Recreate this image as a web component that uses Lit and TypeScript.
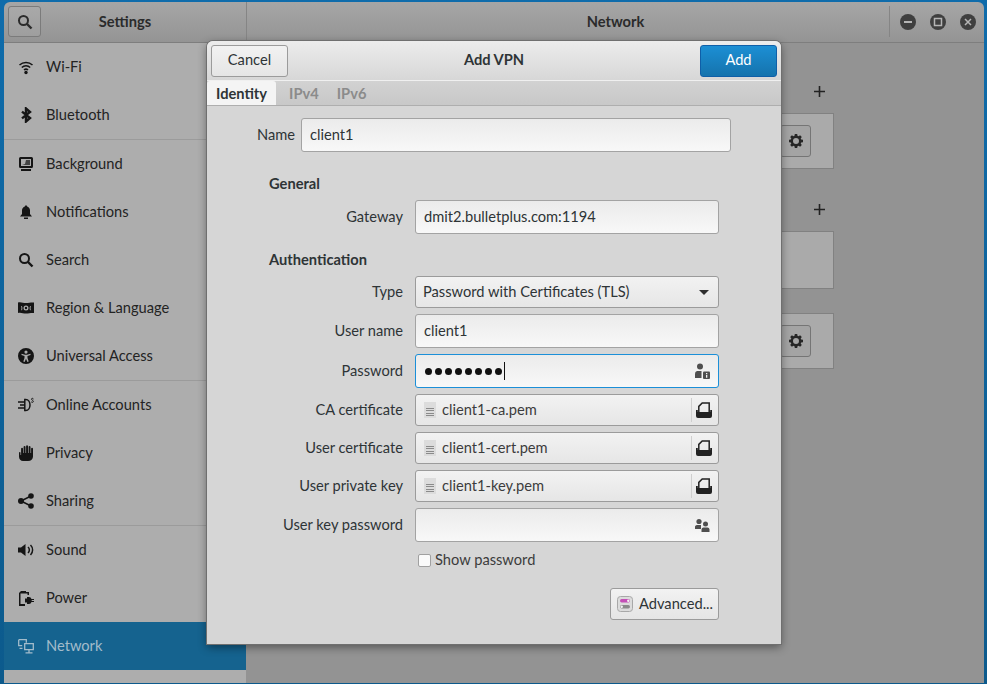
import { LitElement, html, css, svg } from 'lit';
import { customElement } from 'lit/decorators.js';

const FONT = css`Lato, "Noto Sans", sans-serif`;

const icon = (body: unknown, size = 16) => html`<svg class="ic" width=${size} height=${size} viewBox="0 0 16 16" fill="currentColor">${body}</svg>`;

const ICONS: Record<string, unknown> = {
    wifi: svg`<g fill="none" stroke="currentColor" stroke-width="1.5"><path d="M1.5 6a9.5 9.5 0 0 1 13 0"/><path d="M3.8 8.5a6 6 0 0 1 8.4 0"/><path d="M6 11a3 3 0 0 1 4 0"/></g><circle cx="8" cy="13.5" r="1.7"/>`,
    bluetooth: svg`<path fill="none" stroke="currentColor" stroke-width="2.4" d="M4 4.600l8 6.400-4 3.500V1.500l4 3.500-8 6.400"/>`,
    background: svg`<path fill-rule="evenodd" d="M2.500 1h11A1.500 1.500 0 0 1 15 2.500v8a1.500 1.500 0 0 1-1.500 1.500h-11A1.500 1.500 0 0 1 1 10.500v-8A1.500 1.500 0 0 1 2.500 1zM3 3v7h10V3z"/><path d="M4 9l3-1 1-4h4v5z" opacity=".7"/><rect x="3" y="13" width="10" height="2"/>`,
    bell: svg`<path d="M8 1.500c-.8 0-1.300.5-1.400 1.200C4.800 3.300 4 4.800 4 6.500V10l-2 2.500h12L12 10V6.500c0-1.700-.8-3.200-2.600-3.800C9.300 2 8.800 1.500 8 1.500z"/><rect x="6" y="13.500" width="4" height="1.500"/>`,
    search: svg`<circle cx="6.500" cy="6.500" r="4.500" fill="none" stroke="currentColor" stroke-width="2"/><path d="M10 10l4.500 4.500" stroke="currentColor" stroke-width="2.400"/>`,
    region: svg`<path fill-rule="evenodd" d="M0 2.500c3-.8 5 .6 8 .6s5-1 8-.6v10.500c-3-.4-5 .6-8 .6s-5-1.400-8-.6zM8 5.500a2.500 2.500 0 1 0 0 5 2.500 2.500 0 0 0 0-5zm0 1.300a1.200 1.200 0 1 1 0 2.400 1.200 1.200 0 0 1 0-2.400z"/><path d="M3.500 6.200c.5 1.500.5 2.600 0 4M12.500 6.200c-.5 1.500-.5 2.600 0 4" stroke="#adadad" fill="none"/>`,
    access: svg`<path fill-rule="evenodd" d="M8 0a8 8 0 1 1 0 16A8 8 0 0 1 8 0zm0 2.500a1.600 1.600 0 1 0 0 3.200 1.600 1.600 0 0 0 0-3.200zM3.500 5.800v1.300l3 .9v2l-1.200 3.600 1.300.4L8 10.800l1.400 3.200 1.300-.4L9.500 10V8l3-.9V5.800L9 6.800H7z"/>`,
    online: svg`<path fill="none" stroke="currentColor" stroke-width="1.500" d="M6.800 2.500v11h1c2.600 0 4.200-2.500 4.200-5.500s-1.600-5.500-4.200-5.500zM0 5h6.800M0 11h6.800M2 8h4.800"/><path fill="none" stroke="currentColor" stroke-width="1" d="M15.500 2c-.8-1-2-.8-2 .2s1.800 1 1.800 2.200-1.300 1.200-2.100.4"/>`,
    hand: svg`<path d="M1 7.500v4.300C1 14.200 2.800 16 5 16h5c3 0 5-1.800 5-4.500V3.500a1 1 0 0 0-1.900 0V8h-.6V1.700a1 1 0 0 0-1.900 0V8H10V1a1 1 0 0 0-1.900 0v7h-.6V1.700a1 1 0 0 0-1.900 0V8H5V3.500a1 1 0 0 0-1.900 0v6.500H2.500V7.500a.8.800 0 0 0-1.500 0z"/>`,
    share: svg`<circle cx="3" cy="8" r="3"/><circle cx="13" cy="3" r="2.800"/><circle cx="13" cy="13" r="2.800"/><path d="M3 8l10-5M3 8l10 5" stroke="currentColor" stroke-width="1.500"/>`,
    sound: svg`<path d="M0 5.500h3L7.500 2v12L3 10.500H0z"/><path fill="none" stroke="currentColor" stroke-width="1.500" d="M10 5a4 4 0 0 1 0 6"/><path fill="none" stroke="currentColor" stroke-width="1.500" d="M12.500 3a7 7 0 0 1 0 10"/>`,
    power: svg`<path fill-rule="evenodd" d="M3 1h5v1h3v3H9.500V3.500h-5l-2 0V14H7v2H1V3z"/><path d="M7 8.500h2V7h2a3 3 0 0 1 2.500 2H16v1h-2.300v1H16v1h-2.500a3 3 0 0 1-2.500 2H9v-1.500H7z"/>`,
    network: svg`<path fill="none" stroke="currentColor" stroke-width="1.300" d="M.7 1.700h7.600v3M.7 1.700v6h3.500M1.500 10.300h3M6.700 5.700h8.600v6H6.700zM11 11.700v2.800M7.500 14.800h7"/>`,
    gear: svg`<path fill-rule="evenodd" d="M6.800 1h2.400l.3 1.800 1.100.5 1.500-1 1.700 1.600-1.100 1.500.5 1.100 1.800.3v2.400l-1.800.3-.5 1.100 1.100 1.500-1.700 1.700-1.500-1.100-1.100.5-.3 1.800H6.800l-.3-1.800-1.100-.5-1.500 1.100-1.700-1.700 1.100-1.500-.5-1.100L1 9.200V6.800l1.800-.3.500-1.100-1.100-1.500 1.700-1.600 1.500 1 1.100-.5zM8 5a3 3 0 1 0 0 6 3 3 0 0 0 0-6z"/>`,
    person: svg`<circle cx="6" cy="3.500" r="3"/><path d="M1 15v-4a3 3 0 0 1 2-3h4.500v7z"/><rect x="9" y="8.500" width="7" height="7.500" rx="1"/><path d="M12 10h1.300v1.200H12zM12 12h1.300v2.800H12z" fill="#f2f2f2"/>`,
    people: svg`<circle cx="5" cy="4.500" r="2.600"/><path d="M1 12V9.500A2 2 0 0 1 3 8h4v4z"/><circle cx="11.500" cy="7" r="2.500"/><path d="M7.500 15v-2.800a2 2 0 0 1 2-1.700h4a2 2 0 0 1 2 1.700V15z"/>`,
    open: svg`<path d="M0 8h1.800v2h12.400V8H16v6a2 2 0 0 1-2 2H2a2 2 0 0 1-2-2z"/><path fill="none" stroke="currentColor" stroke-width="1.500" d="M2.800 10V4.400L6.200 1h7v9"/>`,
};

const SIDEBAR = [
    [['wifi', 'Wi-Fi'], ['bluetooth', 'Bluetooth']],
    [['background', 'Background'], ['bell', 'Notifications'], ['search', 'Search'], ['region', 'Region & Language'], ['access', 'Universal Access']],
    [['online', 'Online Accounts'], ['hand', 'Privacy'], ['share', 'Sharing']],
    [['sound', 'Sound'], ['power', 'Power'], ['network', 'Network']],
];

@customElement('vpn-dialog')
class VpnDialog extends LitElement {
    static styles = css`
        :host {
            position: absolute;
            left: 207px;
            top: 41px;
            width: 574px;
            height: 603px;
            box-sizing: border-box;
            background: #d6d6d6;
            border-radius: 6px 6px 0 0;
            box-shadow: 0 0 0 1px #6f6f6f, 0 3px 10px rgba(0, 0, 0, .45);
            font: 14.67px ${FONT};
            color: #2e3436;
        }
        .bar {
            height: 40px;
            box-sizing: border-box;
            padding: 4px;
            display: flex;
            justify-content: space-between;
            align-items: center;
            position: relative;
            border-radius: 6px 6px 0 0;
            background: linear-gradient(#ececec, #d7d7d7);
            border-bottom: 1px solid #f0f0f0;
        }
        .title {
            position: absolute;
            left: 0;
            right: 0;
            padding-bottom: 2px;
            text-align: center;
            font-weight: 700;
            pointer-events: none;
        }
        button {
            font: inherit;
            color: inherit;
            box-sizing: border-box;
            height: 32px;
            border: 1px solid #9b9b9b;
            border-radius: 3px;
            background: linear-gradient(#f2f2f2, #e5e5e5);
            padding: 0 0 2px;
        }
        .bar button { width: 77px; }
        .bar .add {
            color: #fff;
            border-color: #0f5fa8;
            background: linear-gradient(#1c8fd4, #1573ad);
        }
        .tabs {
            height: 25px;
            box-sizing: border-box;
            display: flex;
            align-items: stretch;
            background: linear-gradient(#d2d2d2, #c8c8c8);
            border-bottom: 1px solid #aeaeae;
            font-weight: 700;
            color: #8b8b8b;
        }
        .tab {
            padding: 0 9px;
            display: flex;
            align-items: center;
        }
        .tab.on {
            color: #2e3436;
            background: #f4f4f4;
            border-radius: 3px 3px 0 0;
            margin-right: 4px;
        }
        .name {
            display: grid;
            grid-template-columns: 88px 430px;
            gap: 6px;
            align-items: center;
            padding-top: 12px;
        }
        .form {
            display: grid;
            grid-template-columns: 134px 304px;
            column-gap: 12px;
            row-gap: 6px;
            align-items: center;
            padding: 22px 0 0 62px;
        }
        label {
            text-align: right;
            margin-bottom: 2px;
        }
        h4 {
            grid-column: 1 / 3;
            margin: 0;
            font: inherit;
            font-weight: 700;
            height: 20px;
            line-height: 19px;
        }
        h4.second { margin: 10px 0 0; }
        .entry {
            box-sizing: border-box;
            height: 34px;
            display: flex;
            align-items: center;
            padding: 0 8px;
            border: 1px solid #a3a3a3;
            border-radius: 3px;
            background: linear-gradient(#ebebeb, #f8f8f8);
        }
        .entry input {
            flex: 1;
            min-width: 0;
            border: 0;
            outline: 0;
            padding: 0 0 2px;
            background: transparent;
            font: inherit;
            color: inherit;
        }
        .entry .ic { color: #4f4f4f; }
        .focus {
            border-color: #1b8fd8;
        }
        .dots {
            flex: 1;
            display: flex;
            gap: 3px;
            align-items: center;
            margin-left: 1px;
        }
        .dots i {
            width: 7px;
            height: 7px;
            border-radius: 50%;
            background: #111;
        }
        .dots b {
            width: 1px;
            height: 18px;
            margin-left: -1px;
            background: #111;
        }
        .combo, .file {
            height: 32px;
            display: flex;
            align-items: center;
            text-align: left;
            background: linear-gradient(#f2f2f2, #e6e6e6);
        }
        .combo { padding: 0 7px; }
        .combo span, .file span {
            flex: 1;
            margin-bottom: 2px;
        }
        .arrow {
            width: 0;
            height: 0;
            border: 5px solid transparent;
            border-top-color: #2e2e2e;
            border-bottom: 0;
            margin-right: 2px;
        }
        .file { padding: 0 6px 0 8px; gap: 6px; color: #3c3c3c; }
        .doc {
            width: 12px;
            height: 16px;
            box-sizing: border-box;
            padding: 6px 2px 2px;
            background: #dcdcdc;
            display: flex;
            flex-direction: column;
            justify-content: space-between;
        }
        .doc u { display: block; height: 1px; background: #8a8a8a; }
        .file .sep {
            flex: none;
            width: 1px;
            height: 24px;
            background: #cfcfcf;
            margin-right: -2px;
        }
        .file .ic { color: #222; }
        .show {
            grid-column: 2;
            display: flex;
            align-items: center;
            gap: 4px;
            height: 24px;
            padding-left: 3px;
            color: #3c3c3c;
        }
        .show span { margin-bottom: 2px; }
        .box {
            width: 13px;
            height: 13px;
            box-sizing: border-box;
            border: 1px solid #a0a0a0;
            border-radius: 2px;
            background: #fafafa;
        }
        .foot {
            grid-column: 2;
            display: flex;
            justify-content: flex-end;
            margin-top: 10px;
        }
        .adv {
            width: 109px;
            display: flex;
            align-items: center;
            gap: 6px;
            padding: 0 6px;
            white-space: nowrap;
        }
        .adv svg { flex: none; }
        .adv span { margin-bottom: 2px; }
    `;

    file(name: string) {
        return html`<button class="file">
            <div class="doc"><u></u><u></u><u></u><u></u></div>
            <span>${name}</span>
            <div class="sep"></div>
            ${icon(ICONS.open)}
        </button>`;
    }

    render() {
        return html`
            <div class="bar">
                <div class="title">Add VPN</div>
                <button>Cancel</button>
                <button class="add">Add</button>
            </div>
            <div class="tabs">
                <div class="tab on">Identity</div>
                <div class="tab">IPv4</div>
                <div class="tab">IPv6</div>
            </div>
            <div class="name">
                <label>Name</label>
                <div class="entry"><input value="client1"></div>
            </div>
            <div class="form">
                <h4>General</h4>
                <label>Gateway</label>
                <div class="entry"><input value="dmit2.bulletplus.com:1194"></div>
                <h4 class="second">Authentication</h4>
                <label>Type</label>
                <button class="combo"><span>Password with Certificates (TLS)</span><div class="arrow"></div></button>
                <label>User name</label>
                <div class="entry"><input value="client1"></div>
                <label>Password</label>
                <div class="entry focus">
                    <div class="dots">${[1, 2, 3, 4, 5, 6, 7, 8].map(() => html`<i></i>`)}<b></b></div>
                    ${icon(ICONS.person)}
                </div>
                <label>CA certificate</label>
                ${this.file('client1-ca.pem')}
                <label>User certificate</label>
                ${this.file('client1-cert.pem')}
                <label>User private key</label>
                ${this.file('client1-key.pem')}
                <label>User key password</label>
                <div class="entry"><input value="">${icon(ICONS.people)}</div>
                <div class="show"><div class="box"></div><span>Show password</span></div>
                <div class="foot">
                    <button class="adv">
                        <svg width="16" height="16" viewBox="0 0 16 16">
                            <rect x=".5" y=".5" width="15" height="15" rx="3" fill="#dcdcdc" stroke="#a8a8a8"/>
                            <rect x="3" y="3" width="10" height="3.500" rx="1.700" fill="#c44fb6"/>
                            <circle cx="11.300" cy="4.700" r="1.200" fill="#f4f4f4"/>
                            <rect x="3" y="9" width="10" height="3.500" rx="1.700" fill="#8a8a8a"/>
                            <circle cx="4.700" cy="10.700" r="1.200" fill="#f4f4f4"/>
                        </svg>
                        <span>Advanced...</span>
                    </button>
                </div>
            </div>
        `;
    }
}

@customElement('app-root')
class AppRoot extends LitElement {
    static styles = css`
        :host {
            display: block;
            position: relative;
            width: 987px;
            height: 684px;
            box-sizing: border-box;
            padding: 2px 3px 1px 4px;
            overflow: hidden;
            background: linear-gradient(#0f6cab, #0c5a8c);
            font: 14.67px ${FONT};
            color: #232323;
        }
        .win {
            height: 100%;
            display: flex;
            flex-direction: column;
            border-radius: 6px 6px 0 0;
            overflow: hidden;
        }
        .head {
            flex: none;
            height: 41px;
            box-sizing: border-box;
            display: grid;
            grid-template-columns: 243px 1fr;
            background: linear-gradient(#a6a6a6, #949494);
            border-bottom: 1px solid #7e7e7e;
            font-weight: 700;
            color: #2b2b2b;
        }
        .hleft, .hright {
            position: relative;
            display: flex;
            align-items: center;
            justify-content: center;
            padding-bottom: 2px;
        }
        .hleft { border-right: 1px solid #858585; }
        .search {
            position: absolute;
            left: 4px;
            top: 4px;
            width: 33px;
            height: 31px;
            box-sizing: border-box;
            display: flex;
            align-items: center;
            justify-content: center;
            border: 1px solid #7b7b7b;
            border-radius: 3px;
            background: linear-gradient(#a9a9a9, #9e9e9e);
            color: #2b2b2b;
        }
        .controls {
            position: absolute;
            right: 8px;
            top: 4px;
            height: 31px;
            display: flex;
            align-items: center;
            gap: 14px;
            padding-left: 10px;
            border-left: 1px solid #858585;
        }
        .controls span {
            width: 16px;
            height: 16px;
            border-radius: 50%;
            background: #3f3f3f;
            display: flex;
            align-items: center;
            justify-content: center;
        }
        .body {
            flex: 1;
            min-height: 0;
            display: grid;
            grid-template-columns: 242px 1fr;
        }
        .side {
            background: #adadad;
        }
        .row {
            height: 48px;
            display: flex;
            align-items: center;
            gap: 12px;
            padding-left: 14px;
        }
        .row span { margin-bottom: 2px; }
        .row .ic { color: #151515; flex: none; }
        .row.on {
            background: #15638f;
            color: #a3bccb;
        }
        .row.on .ic { color: #a3bccb; }
        .group + .group { border-top: 1px solid #9b9b9b; }
        .main {
            background: #939393;
            padding: 38px 150px 0 151px;
            color: #232323;
        }
        .plus {
            height: 20px;
            display: flex;
            justify-content: flex-end;
            align-items: center;
            padding-right: 9px;
            margin-bottom: 12px;
        }
        .card {
            box-sizing: border-box;
            height: 56px;
            display: flex;
            align-items: center;
            justify-content: flex-end;
            padding-right: 22px;
            background: #aaaaaa;
            border: 1px solid #818181;
        }
        .card.tall { height: 58px; margin-bottom: 24px; }
        .card.gap { margin-bottom: 30px; }
        .gear {
            box-sizing: border-box;
            width: 31px;
            height: 32px;
            display: flex;
            align-items: center;
            justify-content: center;
            border: 1px solid #757575;
            border-radius: 3px;
            background: #a4a4a4;
            color: #262626;
        }
    `;

    render() {
        return html`
            <div class="win">
                <div class="head">
                    <div class="hleft">
                        <div class="search">${icon(ICONS.search)}</div>
                        Settings
                    </div>
                    <div class="hright">
                        Network
                        <div class="controls">
                            <span><svg width="10" height="10" viewBox="0 0 10 10"><rect x="1" y="4" width="8" height="2" fill="#b5b5b5"/></svg></span>
                            <span><svg width="10" height="10" viewBox="0 0 10 10"><rect x="1.500" y="1.500" width="7" height="7" fill="none" stroke="#b5b5b5" stroke-width="1.500"/></svg></span>
                            <span><svg width="10" height="10" viewBox="0 0 10 10"><path d="M2 2l6 6M8 2l-6 6" stroke="#b5b5b5" stroke-width="1.500"/></svg></span>
                        </div>
                    </div>
                </div>
                <div class="body">
                    <div class="side">
                        ${SIDEBAR.map(group => html`<div class="group">
                            ${group.map(([ic, label]) => html`<div class="row ${label === 'Network' ? 'on' : ''}">${icon(ICONS[ic])}<span>${label}</span></div>`)}
                        </div>`)}
                    </div>
                    <div class="main">
                        <div class="plus"><svg width="11" height="11" viewBox="0 0 11 11"><path d="M0 5.500h11M5.500 0v11" stroke="#222" stroke-width="1.600"/></svg></div>
                        <div class="card gap"><div class="gear">${icon(ICONS.gear)}</div></div>
                        <div class="plus"><svg width="11" height="11" viewBox="0 0 11 11"><path d="M0 5.500h11M5.500 0v11" stroke="#222" stroke-width="1.600"/></svg></div>
                        <div class="card tall"></div>
                        <div class="card"><div class="gear">${icon(ICONS.gear)}</div></div>
                    </div>
                </div>
            </div>
            <vpn-dialog></vpn-dialog>
        `;
    }
}
